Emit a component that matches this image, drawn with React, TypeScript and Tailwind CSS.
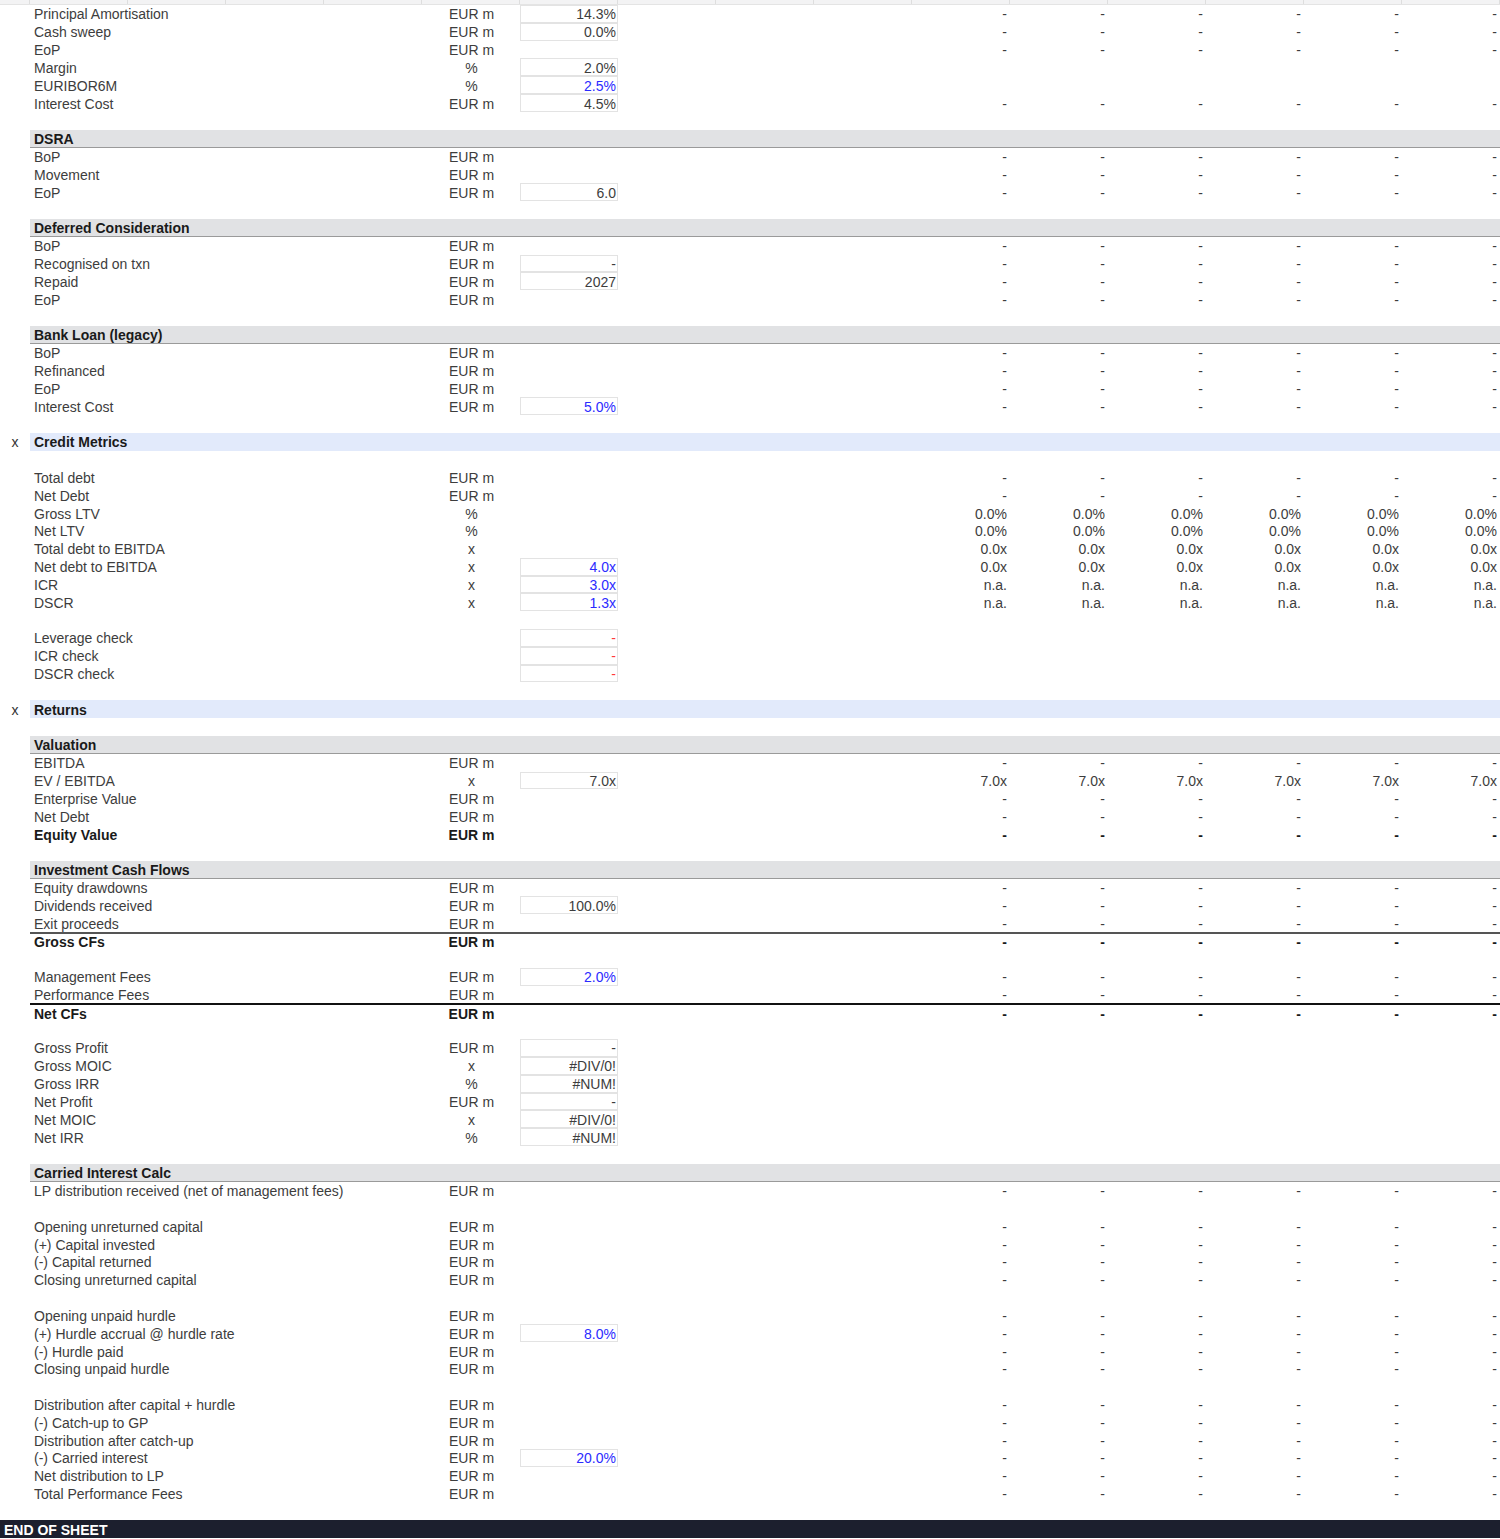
import * as React from 'react';

type Tone = 'plain' | 'blue' | 'red';

type Row =
  | { kind: 'blank' }
  | { kind: 'sub'; title: string }
  | { kind: 'section'; title: string }
  | {
      kind: 'line';
      label: string;
      unit?: string;
      input?: string;
      tone?: Tone;
      values?: string;
      bold?: boolean;
      rule?: 'grey' | 'black';
    };

const D = '-';

// model rows, top to bottom
const rows: Row[] = [
  { kind: 'line', label: 'Principal Amortisation', unit: 'EUR m', input: '14.3%', values: D },
  { kind: 'line', label: 'Cash sweep', unit: 'EUR m', input: '0.0%', values: D },
  { kind: 'line', label: 'EoP', unit: 'EUR m', values: D },
  { kind: 'line', label: 'Margin', unit: '%', input: '2.0%' },
  { kind: 'line', label: 'EURIBOR6M', unit: '%', input: '2.5%', tone: 'blue' },
  { kind: 'line', label: 'Interest Cost', unit: 'EUR m', input: '4.5%', values: D },
  { kind: 'blank' },
  { kind: 'sub', title: 'DSRA' },
  { kind: 'line', label: 'BoP', unit: 'EUR m', values: D },
  { kind: 'line', label: 'Movement', unit: 'EUR m', values: D },
  { kind: 'line', label: 'EoP', unit: 'EUR m', input: '6.0', values: D },
  { kind: 'blank' },
  { kind: 'sub', title: 'Deferred Consideration' },
  { kind: 'line', label: 'BoP', unit: 'EUR m', values: D },
  { kind: 'line', label: 'Recognised on txn', unit: 'EUR m', input: '-', values: D },
  { kind: 'line', label: 'Repaid', unit: 'EUR m', input: '2027', values: D },
  { kind: 'line', label: 'EoP', unit: 'EUR m', values: D },
  { kind: 'blank' },
  { kind: 'sub', title: 'Bank Loan (legacy)' },
  { kind: 'line', label: 'BoP', unit: 'EUR m', values: D },
  { kind: 'line', label: 'Refinanced', unit: 'EUR m', values: D },
  { kind: 'line', label: 'EoP', unit: 'EUR m', values: D },
  { kind: 'line', label: 'Interest Cost', unit: 'EUR m', input: '5.0%', tone: 'blue', values: D },
  { kind: 'blank' },
  { kind: 'section', title: 'Credit Metrics' },
  { kind: 'blank' },
  { kind: 'line', label: 'Total debt', unit: 'EUR m', values: D },
  { kind: 'line', label: 'Net Debt', unit: 'EUR m', values: D },
  { kind: 'line', label: 'Gross LTV', unit: '%', values: '0.0%' },
  { kind: 'line', label: 'Net LTV', unit: '%', values: '0.0%' },
  { kind: 'line', label: 'Total debt to EBITDA', unit: 'x', values: '0.0x' },
  { kind: 'line', label: 'Net debt to EBITDA', unit: 'x', input: '4.0x', tone: 'blue', values: '0.0x' },
  { kind: 'line', label: 'ICR', unit: 'x', input: '3.0x', tone: 'blue', values: 'n.a.' },
  { kind: 'line', label: 'DSCR', unit: 'x', input: '1.3x', tone: 'blue', values: 'n.a.' },
  { kind: 'blank' },
  { kind: 'line', label: 'Leverage check', input: '-', tone: 'red' },
  { kind: 'line', label: 'ICR check', input: '-', tone: 'red' },
  { kind: 'line', label: 'DSCR check', input: '-', tone: 'red' },
  { kind: 'blank' },
  { kind: 'section', title: 'Returns' },
  { kind: 'blank' },
  { kind: 'sub', title: 'Valuation' },
  { kind: 'line', label: 'EBITDA', unit: 'EUR m', values: D },
  { kind: 'line', label: 'EV / EBITDA', unit: 'x', input: '7.0x', values: '7.0x' },
  { kind: 'line', label: 'Enterprise Value', unit: 'EUR m', values: D },
  { kind: 'line', label: 'Net Debt', unit: 'EUR m', values: D },
  { kind: 'line', label: 'Equity Value', unit: 'EUR m', values: D, bold: true },
  { kind: 'blank' },
  { kind: 'sub', title: 'Investment Cash Flows' },
  { kind: 'line', label: 'Equity drawdowns', unit: 'EUR m', values: D },
  { kind: 'line', label: 'Dividends received', unit: 'EUR m', input: '100.0%', values: D },
  { kind: 'line', label: 'Exit proceeds', unit: 'EUR m', values: D },
  { kind: 'line', label: 'Gross CFs', unit: 'EUR m', values: D, bold: true, rule: 'grey' },
  { kind: 'blank' },
  { kind: 'line', label: 'Management Fees', unit: 'EUR m', input: '2.0%', tone: 'blue', values: D },
  { kind: 'line', label: 'Performance Fees', unit: 'EUR m', values: D },
  { kind: 'line', label: 'Net CFs', unit: 'EUR m', values: D, bold: true, rule: 'black' },
  { kind: 'blank' },
  { kind: 'line', label: 'Gross Profit', unit: 'EUR m', input: '-' },
  { kind: 'line', label: 'Gross MOIC', unit: 'x', input: '#DIV/0!' },
  { kind: 'line', label: 'Gross IRR', unit: '%', input: '#NUM!' },
  { kind: 'line', label: 'Net Profit', unit: 'EUR m', input: '-' },
  { kind: 'line', label: 'Net MOIC', unit: 'x', input: '#DIV/0!' },
  { kind: 'line', label: 'Net IRR', unit: '%', input: '#NUM!' },
  { kind: 'blank' },
  { kind: 'sub', title: 'Carried Interest Calc' },
  { kind: 'line', label: 'LP distribution received (net of management fees)', unit: 'EUR m', values: D },
  { kind: 'blank' },
  { kind: 'line', label: 'Opening unreturned capital', unit: 'EUR m', values: D },
  { kind: 'line', label: '(+) Capital invested', unit: 'EUR m', values: D },
  { kind: 'line', label: '(-) Capital returned', unit: 'EUR m', values: D },
  { kind: 'line', label: 'Closing unreturned capital', unit: 'EUR m', values: D },
  { kind: 'blank' },
  { kind: 'line', label: 'Opening unpaid hurdle', unit: 'EUR m', values: D },
  { kind: 'line', label: '(+) Hurdle accrual @ hurdle rate', unit: 'EUR m', input: '8.0%', tone: 'blue', values: D },
  { kind: 'line', label: '(-) Hurdle paid', unit: 'EUR m', values: D },
  { kind: 'line', label: 'Closing unpaid hurdle', unit: 'EUR m', values: D },
  { kind: 'blank' },
  { kind: 'line', label: 'Distribution after capital + hurdle', unit: 'EUR m', values: D },
  { kind: 'line', label: '(-) Catch-up to GP', unit: 'EUR m', values: D },
  { kind: 'line', label: 'Distribution after catch-up', unit: 'EUR m', values: D },
  { kind: 'line', label: '(-) Carried interest', unit: 'EUR m', input: '20.0%', tone: 'blue', values: D },
  { kind: 'line', label: 'Net distribution to LP', unit: 'EUR m', values: D },
  { kind: 'line', label: 'Total Performance Fees', unit: 'EUR m', values: D },
  { kind: 'blank' },
];

const periods = [0, 1, 2, 3, 4, 5];

const GRID = 'grid grid-cols-[30px_repeat(15,98px)] h-[17.835px] items-center';

const toneClass: Record<Tone, string> = {
  plain: 'text-[#3d3d3d]',
  blue: 'text-[#2b2bff]',
  red: 'text-[#ff3b3b]',
};

function SheetRow({ row }: { row: Row }) {
  if (row.kind === 'blank') return <div className="h-[17.835px]" />;

  if (row.kind === 'sub') {
    return (
      <div className={GRID}>
        <div />
        <div className="col-span-15 h-full flex items-center bg-[#e1e2e4] border-b border-[#9a9a9a] pl-1 pt-[1px] font-bold text-[#1a1a1a]">
          {row.title}
        </div>
      </div>
    );
  }

  if (row.kind === 'section') {
    return (
      <div className={GRID}>
        <div className="text-center text-[#333] pt-[1px]">x</div>
        <div className="col-span-15 h-full flex items-center bg-[#e2eafb] pl-1 pt-[1px] font-bold text-[#1a1a1a]">
          {row.title}
        </div>
      </div>
    );
  }

  const rule =
    row.rule === 'grey'
      ? 'border-t-2 border-[#555]'
      : row.rule === 'black'
        ? 'border-t-2 border-[#111]'
        : '';
  const weight = row.bold ? 'font-bold text-[#1a1a1a]' : 'text-[#3d3d3d]';

  return (
    <div className="grid grid-cols-[30px_1470px] h-[17.835px]">
      <div />
      <div className={`grid grid-cols-[repeat(15,98px)] items-center ${rule} ${weight}`}>
        <div className="col-span-4 pl-1 pt-[1px] whitespace-nowrap">{row.label}</div>
        <div className="text-center pt-[1px] pl-[1px] whitespace-nowrap">{row.unit}</div>
        <div className="h-full">
          {row.input !== undefined && (
            <div
              className={`h-full flex items-center justify-end pr-[1px] pt-[1px] border border-[#e3e3e3] bg-white ${toneClass[row.tone ?? 'plain']}`}
            >
              {row.input}
            </div>
          )}
        </div>
        <div className="col-span-3" />
        {periods.map((p) => (
          <div key={p} className="text-right pr-[3px] pt-[1px] whitespace-nowrap">
            {row.values ?? ''}
          </div>
        ))}
      </div>
    </div>
  );
}

export default function App() {
  return (
    <div className="w-[1500px] bg-white text-[14px] leading-none font-['Liberation_Sans',Arial,sans-serif]">
      {/* tail of the column header strip */}
      <div className="grid grid-cols-[30px_repeat(15,98px)] h-[5px] bg-[#f3f3f4] border-b border-[#e4e4e4]">
        {Array.from({ length: 16 }).map((_, i) => (
          <div key={i} className="border-r border-[#dedede]" />
        ))}
      </div>

      {rows.map((row, i) => (
        <SheetRow key={i} row={row} />
      ))}

      <div className="h-[18px] flex items-center bg-[#1c1f2e] pl-1 pt-[1px] font-bold text-white">
        END OF SHEET
      </div>
    </div>
  );
}
